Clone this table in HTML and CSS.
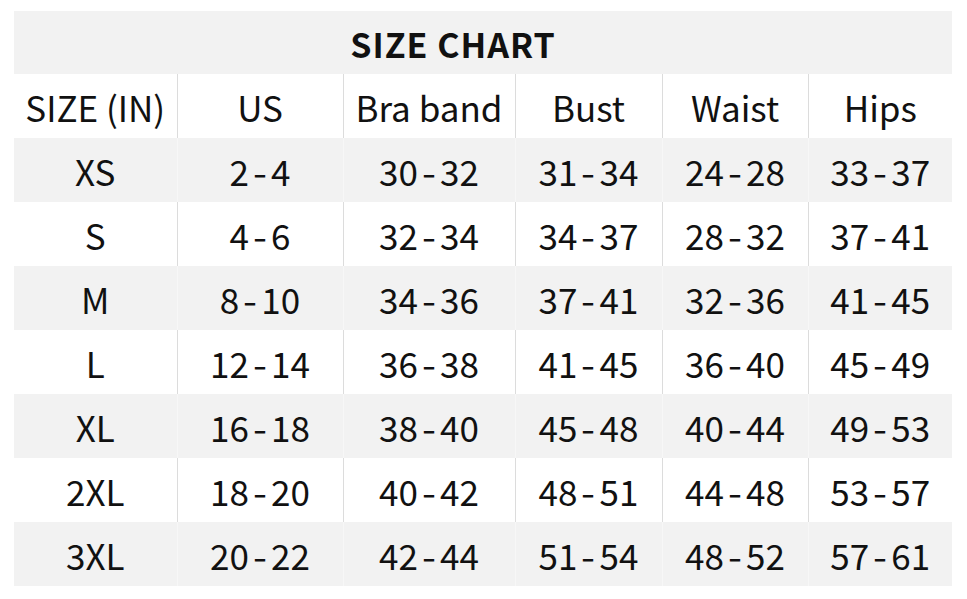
FILE: index.html
```html
<!DOCTYPE html>
<html>
<head>
<meta charset="utf-8">
<link rel="stylesheet" href="styles.css">
</head>
<body>
<div class="page">
<table class="chart">
<colgroup>
<col class="c1"><col class="c2"><col class="c3"><col class="c4"><col class="c5"><col class="c6">
</colgroup>
<tr class="title"><td colspan="6"><span class="title-text">SIZE CHART</span></td></tr>
<tr class="light head"><td>SIZE (IN)</td><td>US</td><td>Bra band</td><td>Bust</td><td>Waist</td><td>Hips</td></tr>
<tr class="grey"><td>XS</td><td>2<span class="dash">-</span>4</td><td>30<span class="dash">-</span>32</td><td>31<span class="dash">-</span>34</td><td>24<span class="dash">-</span>28</td><td>33<span class="dash">-</span>37</td></tr>
<tr class="light"><td>S</td><td>4<span class="dash">-</span>6</td><td>32<span class="dash">-</span>34</td><td>34<span class="dash">-</span>37</td><td>28<span class="dash">-</span>32</td><td>37<span class="dash">-</span>41</td></tr>
<tr class="grey"><td>M</td><td>8<span class="dash">-</span>10</td><td>34<span class="dash">-</span>36</td><td>37<span class="dash">-</span>41</td><td>32<span class="dash">-</span>36</td><td>41<span class="dash">-</span>45</td></tr>
<tr class="light"><td>L</td><td>12<span class="dash">-</span>14</td><td>36<span class="dash">-</span>38</td><td>41<span class="dash">-</span>45</td><td>36<span class="dash">-</span>40</td><td>45<span class="dash">-</span>49</td></tr>
<tr class="grey"><td>XL</td><td>16<span class="dash">-</span>18</td><td>38<span class="dash">-</span>40</td><td>45<span class="dash">-</span>48</td><td>40<span class="dash">-</span>44</td><td>49<span class="dash">-</span>53</td></tr>
<tr class="light"><td>2XL</td><td>18<span class="dash">-</span>20</td><td>40<span class="dash">-</span>42</td><td>48<span class="dash">-</span>51</td><td>44<span class="dash">-</span>48</td><td>53<span class="dash">-</span>57</td></tr>
<tr class="grey"><td>3XL</td><td>20<span class="dash">-</span>22</td><td>42<span class="dash">-</span>44</td><td>51<span class="dash">-</span>54</td><td>48<span class="dash">-</span>52</td><td>57<span class="dash">-</span>61</td></tr>
</table>
</div>
</body>
</html>
```
FILE: styles.css
```css
html, body {
  margin: 0;
  padding: 0;
  background: #ffffff;
}
.page {
  padding: 11px 0 0 14px;
}
.chart {
  border-collapse: collapse;
  table-layout: fixed;
  width: 938px;
  font-family: "Noto Sans CJK SC", "Noto Sans", sans-serif;
  color: #111111;
}
.c1 { width: 163px; }
.c2 { width: 166px; }
.c3 { width: 172px; }
.c4 { width: 147px; }
.c5 { width: 146px; }
.c6 { width: 144px; }
.chart td {
  height: 64px;
  padding: 0;
  text-align: center;
  vertical-align: middle;
  font-size: 35px;
  font-weight: 400;
  line-height: 1;
  white-space: nowrap;
}
.dash {
  display: inline-block;
  margin: 0 5px;
  transform: scaleX(1.15);
}
.chart tr.title td {
  height: 63px;
  background: #f2f2f2;
  padding-right: 60px;
}
.title-text {
  font-size: 34px;
  font-weight: 700;
  letter-spacing: 1px;
}
.chart tr.light td {
  background: #ffffff;
  border-left: 1px solid #dcdcdc;
}
.chart tr.grey td {
  background: #f2f2f2;
  border-left: 1px solid #f7f7f7;
}
.chart tr.light td:first-child,
.chart tr.grey td:first-child {
  border-left: none;
}
```
